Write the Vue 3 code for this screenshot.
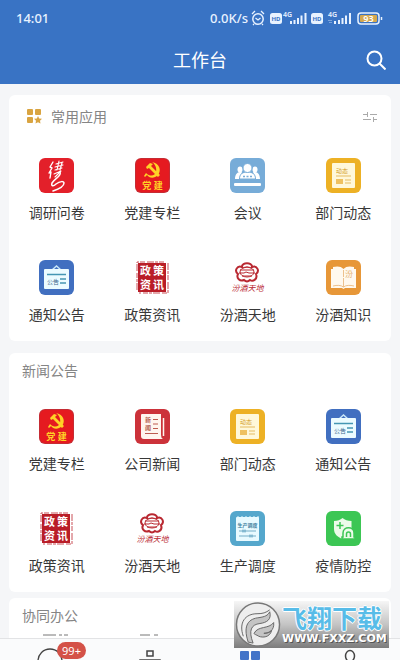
<template>
  <div class="app">
    <header>
      <div class="status">
        <span class="clock">14:01</span>
        <span>0.0K/s</span>
        <svg class="signals" viewBox="0 0 134 20" fill="none" stroke="#e8f2ff">
          <circle cx="8" cy="11" r="5.200" stroke-width="1.500" />
          <path d="M2 6l3-3M14 6l-3-3M5.500 10l2.500 2 2.500-2M4 16l-1 1M12 16l1 1" stroke-width="1.300" />
          <g fill="#e8f2ff" stroke="none">
            <rect x="20" y="5" width="12" height="11" rx="2.500" />
            <rect x="61" y="5" width="12" height="11" rx="2.500" />
            <text x="33" y="9" font-size="7" font-weight="600">4G</text>
            <text x="78" y="9" font-size="7" font-weight="600">4G</text>
            <path d="M40 13h2v3h-2zM43.500 12h2v4h-2zM47 10h2v6h-2zM50.500 7.500h2v8.500h-2zM54.500 5h2v11h-2z" />
            <path d="M84 13h2v3h-2zM88 12h2v4h-2zM91.500 10h2v6h-2zM95 7.500h2v8.500h-2zM99 5h2v11h-2z" />
            <path d="M78 12h4v1h-4zM79 14h3v1h-3z" opacity=".4" />
          </g>
          <g font-size="6" font-weight="700" fill="#3973c4" stroke="none" text-anchor="middle">
            <text x="26" y="13">HD</text>
            <text x="67" y="13">HD</text>
          </g>
          <rect x="108" y="5" width="21" height="11" rx="3" stroke-width="1.500" />
          <rect x="110" y="7" width="17" height="7" rx="1" fill="#d5a84f" stroke="none" />
          <path d="M131.500 9v3" stroke-width="1.500" />
          <text x="118.500" y="14" font-size="9" font-weight="600" text-anchor="middle" fill="#fff" stroke="none">93</text>
        </svg>
      </div>
      <div class="bar">
        <h1>工作台</h1>
        <button class="search" aria-label="搜索">
          <svg viewBox="0 0 20 20" fill="none" stroke="#fff" stroke-width="2">
            <circle cx="8.500" cy="8.500" r="7" />
            <path d="M13.500 13.500l6 6" />
          </svg>
        </button>
      </div>
    </header>

    <main>
      <section v-for="group in groups" :key="group.title" class="card">
        <div class="head" :class="{ tall: group.common }">
          <svg v-if="group.common" class="mark" viewBox="0 0 15 15" fill="#d9a441">
            <rect x="0" y="0" width="6" height="6" rx="1" />
            <rect x="8" y="0" width="6" height="6" rx="1" />
            <rect x="0" y="8" width="6" height="6" rx="1" />
            <path d="M11 7l1.200 2.500 2.800.3-2 1.900.5 2.800-2.500-1.300-2.500 1.300.5-2.800-2-1.900 2.800-.3z" />
          </svg>
          <h2>{{ group.title }}</h2>
          <button v-if="group.common" class="adjust" aria-label="调整">
            <svg viewBox="0 0 14 12" stroke="#aaa" fill="none">
              <path d="M0 3.500h5M4.500 1v5M7 3.500h7M0 8.500h8M10.500 6v5M10 8.500h4" />
            </svg>
          </button>
        </div>
        <div v-if="group.apps.length" class="grid">
          <button v-for="app in group.apps" :key="app.name" class="tile">
            <svg viewBox="0 0 35 35">
              <rect v-if="app.color" width="35" height="35" rx="6" :fill="app.color" />
              <g v-if="app.icon === 'survey'" fill="none" stroke="#fff" stroke-linecap="round" stroke-linejoin="round">
                <path d="M14 4l-3 5 2 1-3 5 2-1-1 6" stroke-width="1.400" />
                <path d="M17 6l7-2M16 9l8-2M20 3l-2 9M23 5l-2 7M16 12l7-2M15 16l7-3-6 6" stroke-width="1.100" />
                <path d="M21 14c2 4-5 6-8 11-1 3 1 4 4 1 4-3 8-3 8-1 0 3-5 6-11 8" stroke-width="1.500" />
              </g>
              <g v-else-if="app.icon === 'party'" fill="#ffd326">
                <rect x="1" y="1" width="33" height="33" rx="5" fill="#e51a20" />
                <path d="M17 4c7 1 10 8 6 13-4 4-9 3-11 0l-2 2-1-1 2-3c4 4 9 3 10-1 1-4-1-8-4-10z" />
                <path d="M11 9l4-4 3 1-2 2 9 9-2 2-9-9-2 1z" />
                <text x="17.500" y="31" font-size="9" font-weight="700" text-anchor="middle">党 建</text>
              </g>
              <g v-else-if="app.icon === 'meeting'" fill="#fff">
                <ellipse cx="10" cy="11.500" rx="2.500" ry="3" />
                <ellipse cx="25" cy="11.500" rx="2.500" ry="3" />
                <path d="M5 21c0-4 2-7 5-7h2l-3 7zM30 21c0-4-2-7-5-7h-2l3 7z" />
                <path d="M9.500 21c0-5 3-7 8-7s8 2 8 7z" stroke="#77acd8" />
                <circle cx="17.500" cy="10" r="4.500" stroke="#77acd8" />
                <rect x="4" y="25" width="27" height="3" rx="1" />
                <path d="M13 18.500h9" stroke="#77acd8" stroke-width="1.500" stroke-dasharray="2 1.500" />
              </g>
              <g v-else-if="app.icon === 'trends'">
                <rect x="6" y="5" width="23" height="25" rx="1" fill="#fff8da" />
                <text x="10" y="14.500" font-size="6" fill="#d5a12b">动态</text>
                <path d="M10 18h15M19 22h6M19 25h6" stroke="#e5bb60" />
                <rect x="10" y="21" width="7" height="5" fill="#efc15f" />
              </g>
              <g v-else-if="app.icon === 'notice'">
                <path d="M13 10l4.500-4 4.500 4" fill="none" stroke="#c9e7f8" stroke-width="1.500" />
                <rect x="5" y="9" width="25" height="20" rx="1" fill="#ecfbff" />
                <path d="M8 14.500h19M21 19h6M21 23h6" stroke="#4596b3" stroke-width="1.500" />
                <text x="8" y="24" font-size="6" fill="#3b668d">公告</text>
              </g>
              <g v-else-if="app.icon === 'policy'">
                <rect x="3" y="3" width="28" height="29" fill="#b91d27" />
                <path d="M2 30V2h28M33 3v30H4" fill="none" stroke="#c95158" stroke-dasharray="7 1 3 1 5 2" />
                <g font-size="11" font-weight="700" fill="#fff" text-anchor="middle">
                  <text x="10.500" y="14.500">政</text>
                  <text x="23.500" y="14.500">策</text>
                  <text x="10.500" y="28.500">资</text>
                  <text x="23.500" y="28.500">讯</text>
                </g>
              </g>
              <g v-else-if="app.icon === 'world'" fill="none" stroke="#b92831">
                <path d="M12 7c0-5 10-5 10 0 5-2 8 4 4 7 2 5-3 8-6 6-2 2-4 2-6 0-4 2-8-2-6-6-4-3-1-9 4-7z" stroke-width="2" />
                <ellipse cx="17" cy="12" rx="7" ry="5" />
                <path d="M10 10h14M9 13h5l2-1 3 1h6M12 16h10M13 8l4-1 4 1" />
                <text x="17.500" y="31" font-size="8" font-style="italic" text-anchor="middle" fill="#b92831" stroke="none">汾酒天地</text>
              </g>
              <g v-else-if="app.icon === 'knowledge'">
                <path d="M5 9h2V7c4-1 8-1 10.500 2C20 6 24 6 28 7v2h2v19H19l-1.500 1-1.500-1H5z" fill="#fff9ef" />
                <path d="M17.500 10v7M7 26c4-1 8-1 10.500 1C20 25 24 25 28 26M17.500 18v9" fill="none" stroke="#edc18d" />
                <text x="19" y="17" font-size="8" fill="#e6b273">汾</text>
              </g>
              <g v-else-if="app.icon === 'news'">
                <path d="M6 6q0-1 1-1h19v21q0 3 2 4H9q-3 0-3-3z" fill="#fff5ef" />
                <path d="M28.500 9v18" stroke="#fff5ef" stroke-width="1.500" />
                <g font-size="6" font-weight="700" fill="#b46351">
                  <text x="10" y="13">新</text>
                  <text x="10" y="21">闻</text>
                </g>
                <path d="M18 10.500h5M18 15h5M18 19.500h5M10 24.500h13" stroke="#bd5b50" />
              </g>
              <g v-else-if="app.icon === 'production'">
                <rect x="6" y="6" width="23" height="24" rx="1" fill="#e8faff" />
                <path d="M8 5v2M12 5v2M16 5v2M20 5v2M24 5v2M28 5v2" stroke="#e8faff" />
                <text x="17.500" y="15.500" font-size="5" font-weight="700" text-anchor="middle" fill="#397a9b">生产调度</text>
                <path d="M9 20h17M9 25h17" stroke="#74adc7" />
                <path d="M13 18.500v3M15 18.500v3M20 23.500v3M22 23.500v3" stroke="#5b9fbe" />
              </g>
              <g v-else>
                <path d="M8 10c4 0 6-1 8.500-3 2.500 2 5 3 9 3v8c0 5-4 8-9 10-5-2-8.500-5-8.500-10z" fill="#ecfbe9" />
                <path d="M14 11v7M10.500 14.500h7" stroke="#3cc654" stroke-width="1.500" />
                <path d="M16 28h13v-2h-1v-4c0-7-11-7-11 0v4h-1z" fill="#ecfbe9" stroke="#3cc654" stroke-width="1.500" />
                <path d="M20.500 26v-3q0-2 2-2t2 2v3" fill="none" stroke="#3cc654" stroke-width="1.500" />
              </g>
            </svg>
            <span>{{ app.name }}</span>
          </button>
        </div>
        <svg v-else class="peek" viewBox="0 0 120 2" stroke="#777">
          <path d="M0 1h13M16 1h3M21 1h4M97 1h10M111 1h4" />
        </svg>
      </section>
    </main>

    <nav>
      <a href="#" aria-label="消息">
        <svg viewBox="0 0 28 22" fill="none" stroke="#444" stroke-width="1.300">
          <circle cx="14" cy="22" r="12" />
        </svg>
        <b class="badge">99+</b>
      </a>
      <a href="#" aria-label="通讯录">
        <svg viewBox="0 0 28 22" fill="none" stroke="#444" stroke-width="1.500">
          <path d="M11 12h6v5h-6zM4 22v-1h20v1" />
        </svg>
      </a>
      <a href="#" aria-label="工作台">
        <svg viewBox="0 0 28 22" fill="#4374c8">
          <rect x="4" y="12" width="9" height="9" rx="1" />
          <rect x="15" y="12" width="9" height="9" rx="1" />
        </svg>
      </a>
      <a href="#" aria-label="我的">
        <svg viewBox="0 0 28 22" fill="none" stroke="#444" stroke-width="1.500">
          <ellipse cx="14" cy="17" rx="4.500" ry="5.500" />
        </svg>
      </a>
    </nav>

    <aside class="stamp">
      <svg viewBox="0 0 48 48">
        <circle cx="24" cy="24" r="22" fill="#eee" stroke="#777" stroke-width="1.500" />
        <g fill="#c4c4c4" stroke="#666">
          <path d="M14 42C8 24 15 18 25 17c6-1 9-2 11-6 2 8-3 11-10 12-9 1-12 7-7 20z" />
          <path d="M9 36C4 22 11 13 23 13c6 0 9-1 13-4" fill="none" />
          <path d="M20 33c4-8 15-4 20-11 1 8-5 11-10 11 4 0 6-1 8-3-2 8-11 8-15 5-2-1-3-1-3-2z" />
        </g>
      </svg>
      <div>
        <strong>飞翔下载</strong>
        <em>WWW.FXXZ.COM</em>
      </div>
    </aside>
  </div>
</template>

<script setup>
const groups = [
  {
    title: '常用应用',
    common: true,
    apps: [
      { name: '调研问卷', icon: 'survey', color: '#e3202a' },
      { name: '党建专栏', icon: 'party', color: '#c52c34' },
      { name: '会议', icon: 'meeting', color: '#77acd8' },
      { name: '部门动态', icon: 'trends', color: '#edb125' },
      { name: '通知公告', icon: 'notice', color: '#416fc0' },
      { name: '政策资讯', icon: 'policy' },
      { name: '汾酒天地', icon: 'world' },
      { name: '汾酒知识', icon: 'knowledge', color: '#e79738' },
    ],
  },
  {
    title: '新闻公告',
    apps: [
      { name: '党建专栏', icon: 'party', color: '#c52c34' },
      { name: '公司新闻', icon: 'news', color: '#cc323a' },
      { name: '部门动态', icon: 'trends', color: '#edb125' },
      { name: '通知公告', icon: 'notice', color: '#416fc0' },
      { name: '政策资讯', icon: 'policy' },
      { name: '汾酒天地', icon: 'world' },
      { name: '生产调度', icon: 'production', color: '#55a7cc' },
      { name: '疫情防控', icon: 'health', color: '#3cc654' },
    ],
  },
  { title: '协同办公', apps: [] },
]
</script>

<style>
body {
  margin: 0;
}
</style>

<style scoped>
.app {
  position: relative;
  display: flex;
  flex-direction: column;
  height: 100vh;
  overflow: hidden;
  background: #f5f6f8;
  color: #383838;
  font-family: "Noto Sans", "Noto Sans CJK SC", sans-serif;
}
button {
  padding: 0;
  border: 0;
  background: none;
  color: inherit;
  font-family: inherit;
}
svg {
  display: block;
}
h1,
h2 {
  margin: 0;
  font-weight: 400;
}
header {
  flex: none;
  background: #3973c4;
  color: #fff;
}
.status {
  display: flex;
  align-items: center;
  height: 36px;
  padding: 0 16px;
  font-size: 13px;
  font-weight: 500;
  color: #e8f2ff;
}
.clock {
  margin-right: auto;
}
.signals {
  width: 134px;
  height: 20px;
  margin-left: 2px;
}
.bar {
  display: grid;
  grid-template-columns: 1fr auto 1fr;
  align-items: center;
  height: 48px;
  padding: 0 14px;
}
h1 {
  grid-column: 2;
  font-size: 18px;
  line-height: 24px;
}
.search {
  justify-self: end;
}
.search svg {
  width: 20px;
  height: 20px;
}
main {
  flex: 1;
  min-height: 0;
  overflow: hidden;
  padding: 11px 9px 0;
}
.card {
  margin-bottom: 6px;
  border-radius: 6px;
  background: #fff;
}
.card:first-child {
  margin-bottom: 12px;
}
.card:last-child {
  padding-bottom: 20px;
}
.head {
  display: flex;
  align-items: center;
  height: 36px;
  padding: 0 14px 0 13px;
}
.head.tall {
  height: 43px;
  padding-left: 18px;
}
.mark {
  width: 15px;
  height: 15px;
  margin-right: 9px;
}
h2 {
  font-size: 14px;
  line-height: 20px;
  color: #858585;
}
.adjust {
  margin-left: auto;
}
.adjust svg {
  width: 14px;
  height: 12px;
}
.grid {
  display: grid;
  grid-template-columns: repeat(4, 1fr);
  row-gap: 37px;
  padding: 20px 0 16px;
}
.tile {
  display: flex;
  flex-direction: column;
  align-items: center;
  gap: 10px;
  font-size: 14px;
  line-height: 20px;
}
.tile svg {
  width: 35px;
  height: 35px;
}
.peek {
  width: 120px;
  height: 2px;
  margin-left: 34px;
}
nav {
  flex: none;
  display: grid;
  grid-template-columns: repeat(4, 1fr);
  height: 21px;
  border-top: 1px solid #e2e3e5;
  background: #fafbfc;
}
nav a {
  position: relative;
  display: flex;
  justify-content: center;
}
nav svg {
  width: 28px;
  height: 22px;
}
.badge {
  position: absolute;
  top: 3px;
  left: 57%;
  width: 29px;
  border-radius: 9px;
  background: #d45248;
  color: #fff;
  font-size: 11px;
  font-weight: 400;
  line-height: 17px;
  text-align: center;
}
/* site stamp lies over the page */
.stamp {
  position: absolute;
  right: 11px;
  bottom: 12px;
  display: flex;
  align-items: center;
  width: 155px;
  height: 47px;
  background: linear-gradient(#f6f6f6, #c4c4c4 50%, #7c7c7c);
}
.stamp svg {
  flex: none;
  width: 48px;
  height: 47px;
}
.stamp strong,
.stamp em {
  display: block;
  white-space: nowrap;
  font-style: normal;
  font-weight: 700;
}
.stamp strong {
  font-size: 25px;
  line-height: 28px;
  color: #58bce8;
  text-shadow: 1px 0 #fff, -1px 0 #fff, 0 1px #fff, 0 -1px #fff;
}
.stamp em {
  font-family: "DejaVu Sans", sans-serif;
  font-size: 11px;
  line-height: 14px;
  color: #fff;
  text-shadow: 1px 1px #555;
}
</style>
